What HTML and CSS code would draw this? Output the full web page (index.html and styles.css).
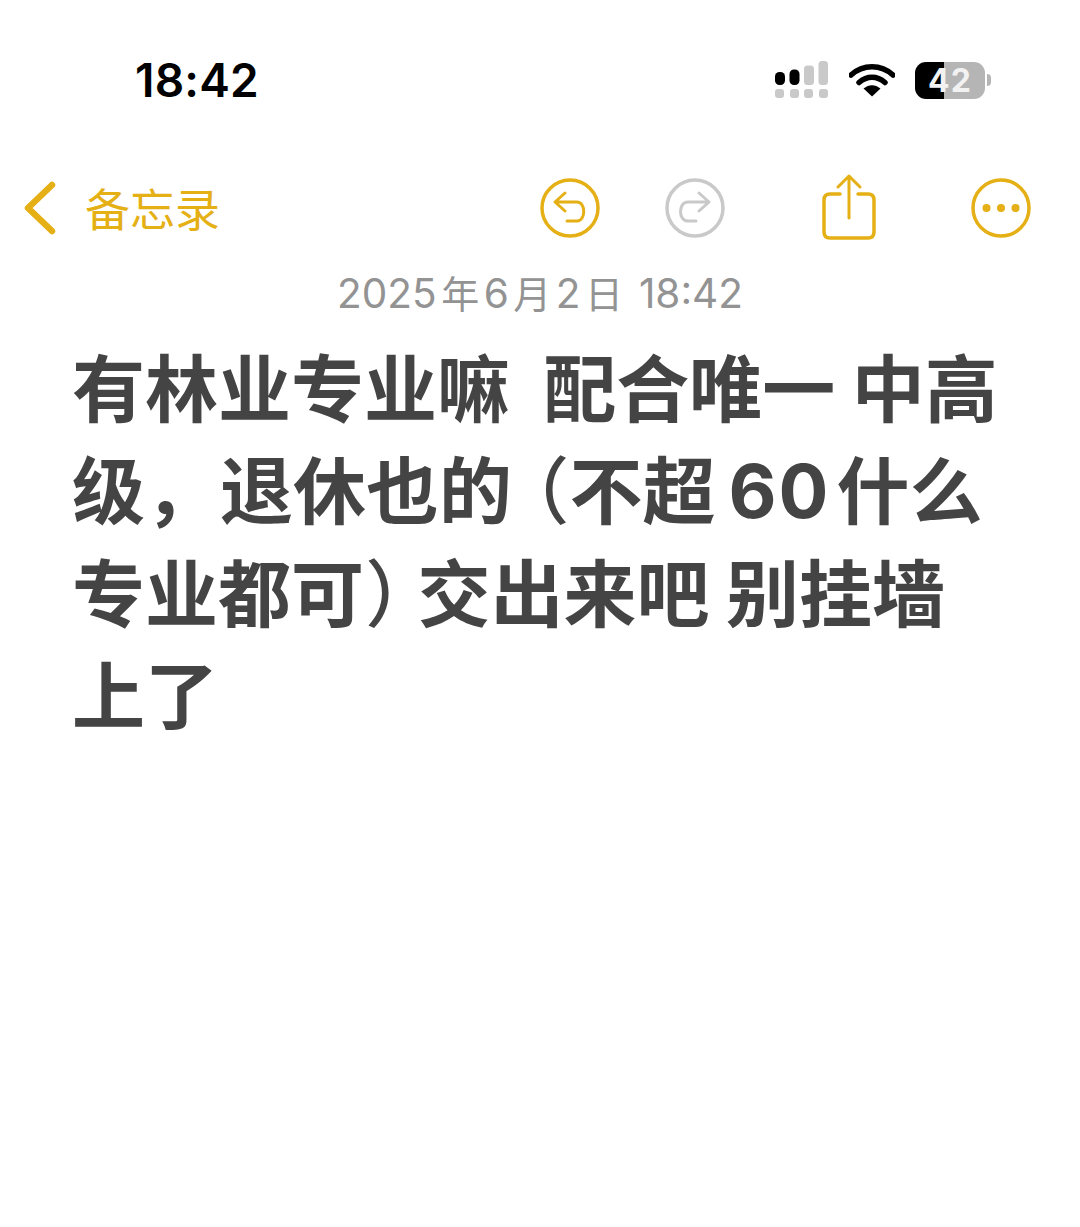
FILE: index.html
```html
<!DOCTYPE html>
<html lang="zh">
<head>
<meta charset="utf-8">
<title>备忘录</title>
<link rel="stylesheet" href="styles.css">
</head>
<body>
<div class="page">
  <header class="status">
    <span class="time">18:42</span>
    <div class="status-icons">
      <svg class="signal" width="54" height="38" viewBox="0 0 54 38">
        <rect x="0" y="11" width="10" height="13" rx="4.500" fill="#000"/>
        <rect x="14.500" y="8.500" width="10" height="15.500" rx="4.500" fill="#000"/>
        <rect x="29" y="4.500" width="10" height="19.500" rx="3.500" fill="#c9c9c9"/>
        <rect x="43.500" y="0" width="9.500" height="24" rx="3.500" fill="#c9c9c9"/>
        <rect x="0" y="28" width="9" height="9" rx="3" fill="#c9c9c9"/>
        <rect x="15" y="28" width="9" height="9" rx="3" fill="#c9c9c9"/>
        <rect x="29" y="28" width="9" height="9" rx="3" fill="#c9c9c9"/>
        <rect x="44" y="28" width="9" height="9" rx="3" fill="#c9c9c9"/>
      </svg>
      <svg class="wifi" width="46" height="34" viewBox="0 0 46 34">
        <path d="M2 12 C14 1 32 1 44 12" fill="none" stroke="#000" stroke-width="5.500" stroke-linecap="round"/>
        <path d="M10 19.500 C18 12.500 28 12.500 36 19.500" fill="none" stroke="#000" stroke-width="5.500" stroke-linecap="round"/>
        <path d="M14.500 25.500 C20 21 26 21 31.500 25.500 L23 33.500 Z" fill="#000"/>
      </svg>
      <div class="battery">
        <div class="battery-body"><span class="battery-level">42</span></div>
        <span class="battery-cap"></span>
      </div>
    </div>
  </header>
  <nav class="toolbar">
    <div class="back">
      <svg width="34" height="54" viewBox="0 0 34 54">
        <path d="M29 4 L5 27 L29 50" fill="none" stroke="#e5b015" stroke-width="6.500" stroke-linecap="round" stroke-linejoin="round"/>
      </svg>
      <span class="back-label">备忘录</span>
    </div>
    <div class="actions">
      <svg class="icon-undo" width="60" height="60" viewBox="0 0 60 60">
        <circle cx="30" cy="30" r="28" fill="none" stroke="#e5b015" stroke-width="3.500"/>
        <path d="M25 15 L15 24 L25 33 M15 24 H37 C46 24 46 43 37 43 H27" fill="none" stroke="#e5b015" stroke-width="3" stroke-linecap="round" stroke-linejoin="round"/>
      </svg>
      <svg class="icon-redo" width="60" height="60" viewBox="0 0 60 60">
        <circle cx="30" cy="30" r="28" fill="none" stroke="#c9c9c9" stroke-width="3.500"/>
        <path d="M34 15 L44 24 L34 33 M44 24 H23 C13 24 13 43 23 43 H31" fill="none" stroke="#c9c9c9" stroke-width="3" stroke-linecap="round" stroke-linejoin="round"/>
      </svg>
      <svg class="icon-share" width="54" height="68" viewBox="0 0 54 68">
        <path d="M18 20 H8 Q2 20 2 26 V58 Q2 64 8 64 H46 Q52 64 52 58 V26 Q52 20 46 20 H36" fill="none" stroke="#e5b015" stroke-width="3.500" stroke-linecap="round"/>
        <path d="M27 44 V3 M16 13 L27 2 L38 13" fill="none" stroke="#e5b015" stroke-width="3" stroke-linecap="round" stroke-linejoin="round"/>
      </svg>
      <svg class="icon-more" width="60" height="60" viewBox="0 0 60 60">
        <circle cx="30" cy="30" r="28" fill="none" stroke="#e5b015" stroke-width="3.500"/>
        <circle cx="15.500" cy="30" r="4" fill="#e5b015"/>
        <circle cx="30" cy="30" r="4" fill="#e5b015"/>
        <circle cx="44.500" cy="30" r="4" fill="#e5b015"/>
      </svg>
    </div>
  </nav>
  <p class="date">2025<span class="cjk">年</span>6<span class="cjk">月</span>2<span class="cjk">日</span> 18:42</p>
  <p class="note">有林业专业嘛&nbsp;&nbsp;配合唯一 中高<br>级<span class="comma">，</span>退休也的<span class="paren paren-open">（</span>不超<span class="num">60</span>什么<br>专业都可<span class="paren paren-close">）</span>交出来吧 别挂墙<br>上了</p>
</div>
</body>
</html>
```
FILE: styles.css
```css
html, body { margin: 0; padding: 0; background: #fff; }
.page {
  width: 1080px;
  height: 1227px;
  overflow: hidden;
  font-family: "Noto Sans CJK SC", "Inter", sans-serif;
}
.status {
  display: flex;
  justify-content: space-between;
  align-items: center;
  height: 60px;
  padding: 50px 89px 0 135px;
}
.time {
  font-family: "Inter", "Liberation Sans", sans-serif;
  font-size: 46px;
  font-weight: 600;
  letter-spacing: 0.2px;
  color: #000;
  line-height: 60px;
}
.status-icons { display: flex; align-items: center; gap: 20px; }
.battery { display: flex; align-items: center; gap: 2px; }
.battery-body {
  width: 70px;
  height: 37px;
  border-radius: 11px;
  background: linear-gradient(90deg, #000 0 41%, #b5b5b5 41% 100%);
  display: flex;
  align-items: center;
  justify-content: center;
}
.battery-level {
  font-family: "Inter", "Liberation Sans", sans-serif;
  font-size: 32px;
  font-weight: 700;
  letter-spacing: 1px;
  color: #f2f2f2;
  line-height: 37px;
}
.battery-cap {
  width: 4px;
  height: 12px;
  background: #b5b5b5;
  border-radius: 0 4px 4px 0;
}
.toolbar {
  display: flex;
  justify-content: space-between;
  align-items: center;
  height: 70px;
  margin-top: 63px;
  padding: 0 49px 0 23px;
}
.back { display: flex; align-items: center; gap: 28px; }
.back-label {
  font-size: 45px;
  line-height: 54px;
  color: #e5b015;
}
.actions { display: flex; align-items: center; gap: 65px; }
.icon-share { margin: 0 30px 0 32px; }
.date {
  margin: 27px 0 0;
  text-align: center;
  font-family: "Inter", "Noto Sans CJK SC", sans-serif;
  font-size: 40.5px;
  line-height: 48px;
  color: #939393;
}
.cjk { font-size: 38px; margin: 0 4.5px; }
.note {
  margin: 15px 0 0;
  padding: 0 70px 0 72px;
  font-size: 73px;
  font-weight: 700;
  line-height: 102.4px;
  color: #444;
  white-space: nowrap;
}
.comma { margin-right: 2px; }
.paren { font-weight: 500; line-height: 1; font-feature-settings: "palt"; }
.paren-open { margin: 0 3px 0 18px; }
.paren-close { margin: 0 13px 0 4px; }
.num {
  font-family: "Inter", sans-serif;
  font-size: 74px;
  letter-spacing: 2px;
  line-height: 1;
  margin: 0 6px 0 13px;
}
```
